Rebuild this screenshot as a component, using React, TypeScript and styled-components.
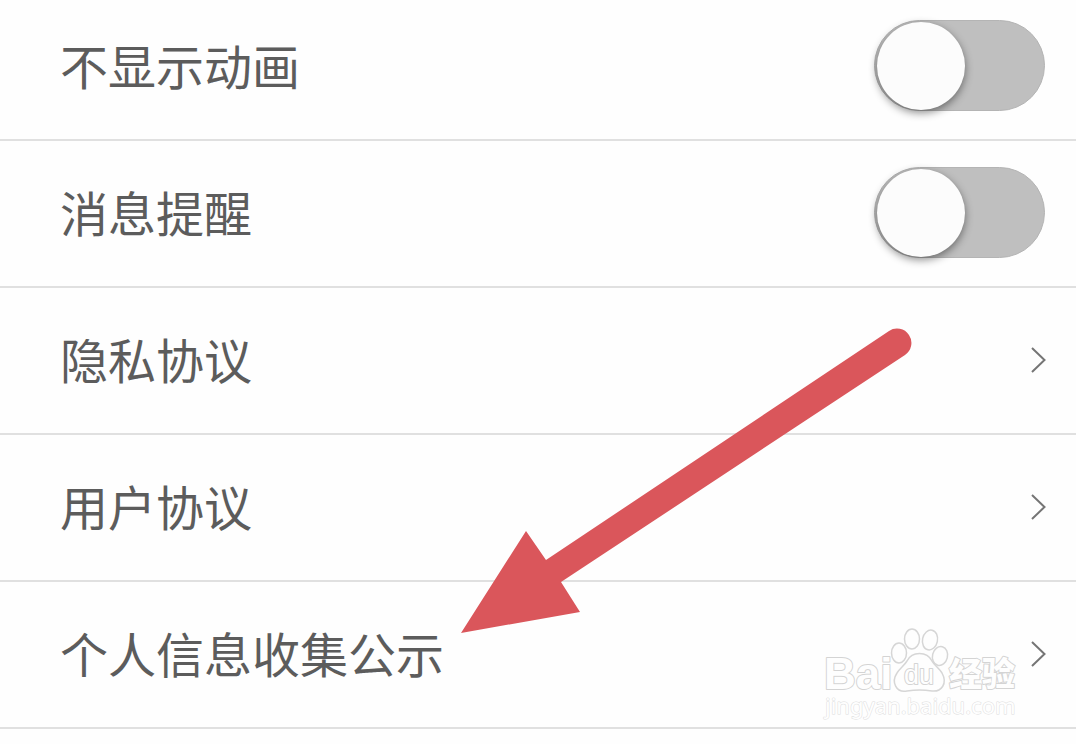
import React from "react";
import styled, { createGlobalStyle, css } from "styled-components";

const GlobalStyle = createGlobalStyle`
  * { box-sizing: border-box; }
  body {
    margin: 0;
    background: #fefefe;
    color: #5c5c5c;
    font-family: "Noto Sans CJK SC", sans-serif;
  }
`;

const Screen = styled.main`
  position: relative;
  min-height: 100vh;
  overflow: hidden;
`;

const SettingsList = styled.ul`
  list-style: none;
  margin: -6px 0 0;
  padding: 0;
`;

const SettingsItem = styled.li`
  border-bottom: 2px solid #e0e0e0;
`;

const rowLayout = css`
  display: flex;
  align-items: center;
  justify-content: space-between;
  min-height: 145px;
  padding: 0 30px 2px 60px;
  color: inherit;
  text-decoration: none;
`;

const ToggleRow = styled.label`
  ${rowLayout}
`;

const LinkRow = styled.a`
  ${rowLayout}
`;

const RowTitle = styled.span`
  font-size: 48px;
  line-height: 72px;
  padding-bottom: 4px;
`;

const Toggle = styled.input`
  appearance: none;
  flex: none;
  display: flex;
  align-items: center;
  width: 171px;
  height: 91px;
  margin: 0 1px 0 0;
  padding: 0 2px;
  border: 1px solid #b4b4b4;
  border-radius: 46px;
  background: #bfbfbf;

  &::before {
    content: "";
    width: 88px;
    height: 88px;
    border-radius: 50%;
    background: #fcfcfc;
    box-shadow: 0 3px 8px rgba(0, 0, 0, 0.45);
  }

  &:checked {
    justify-content: flex-end;
    background: #8bc98f;
  }
`;

const Chevron = styled.svg`
  flex: none;
  width: 16px;
  height: 28px;
  fill: none;
  stroke: #757575;
  stroke-width: 2;
`;

const Arrow = styled.svg`
  position: absolute;
  left: 460px;
  top: 326px;
  width: 454px;
  height: 310px;
  pointer-events: none;
`;

const Watermark = styled.svg`
  position: absolute;
  right: 52px;
  top: 622px;
  width: 204px;
  height: 102px;
  fill: #fefefe;
  stroke: #d6d6d6;
  stroke-width: 1.5;
  stroke-linejoin: round;
  pointer-events: none;
`;

const WatermarkText = styled.text<{ $size: number; $bold?: boolean; $faint?: boolean }>`
  font-family: ${(p) => (p.$faint ? '"Noto Sans"' : '"Liberation Sans"')}, "Noto Sans CJK SC", sans-serif;
  font-size: ${(p) => p.$size}px;
  font-weight: ${(p) => (p.$bold ? 900 : 400)};
  stroke-width: ${(p) => (p.$faint ? 1 : 2)}px;
  stroke: ${(p) => (p.$faint ? "#dddddd" : "#d4d4d4")};
  paint-order: stroke;
`;

const toggles = ["不显示动画", "消息提醒"];
const links = ["隐私协议", "用户协议", "个人信息收集公示"];

export default function App() {
  return (
    <Screen>
      <GlobalStyle />
      <SettingsList>
        {toggles.map((title) => (
          <SettingsItem key={title}>
            <ToggleRow>
              <RowTitle>{title}</RowTitle>
              <Toggle type="checkbox" role="switch" />
            </ToggleRow>
          </SettingsItem>
        ))}
        {links.map((title) => (
          <SettingsItem key={title}>
            <LinkRow href="#">
              <RowTitle>{title}</RowTitle>
              <Chevron viewBox="0 0 16 28" aria-hidden="true">
                <path d="M2 2 L14.5 14 L2 26" />
              </Chevron>
            </LinkRow>
          </SettingsItem>
        ))}
      </SettingsList>

      <Watermark viewBox="0 0 204 102">
        <WatermarkText x="4" y="67" $size={44} $bold>Bai</WatermarkText>
        <ellipse cx="79" cy="31" rx="7.5" ry="10" />
        <ellipse cx="92" cy="17" rx="7.5" ry="10" />
        <ellipse cx="110" cy="18" rx="7.5" ry="10" transform="rotate(12 110 18)" />
        <ellipse cx="120" cy="34" rx="7.5" ry="9.5" transform="rotate(14 120 34)" />
        <path d="M87 39 C92 29 107 29 112 39 C115 44 119 46 122 51 C128 62 121 70 112 69 C105 68 94 68 87 69 C76 71 71 60 77 51 C80 46 84 44 87 39 Z" />
        <WatermarkText x="84" y="62" $size={27}>du</WatermarkText>
        <WatermarkText x="129" y="64" $size={33} $bold>经验</WatermarkText>
        <WatermarkText x="5" y="92" $size={22} $faint>jingyan.baidu.com</WatermarkText>
      </Watermark>

      <Arrow viewBox="460 326 454 310" aria-hidden="true">
        <path
          d="M461 633 L526 531 L546 560 L889 331 A14 14 0 0 1 905 355 L561 582 L580 612 Z"
          fill="#da565b"
        />
      </Arrow>
    </Screen>
  );
}
